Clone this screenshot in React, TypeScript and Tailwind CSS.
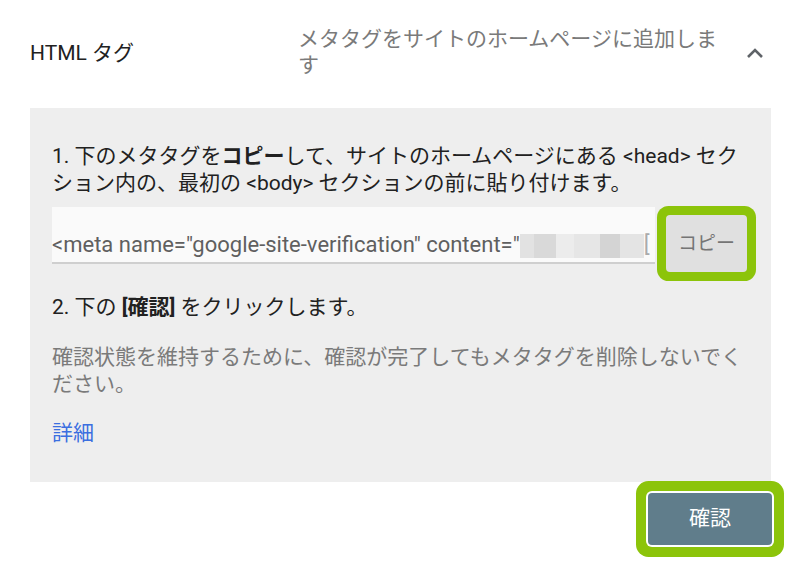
const font = "font-['Roboto','Noto_Sans_CJK_JP',sans-serif]";

function ChevronUp() {
  return (
    <svg width="18" height="12" viewBox="0 0 18 12" fill="none">
      <path d="M2 10 L9 3 L16 10" stroke="#5f6368" strokeWidth="2.6" />
    </svg>
  );
}

export default function App() {
  return (
    <div className={`${font} bg-white w-[800px] h-[564px] overflow-hidden text-[#212121]`}>
      {/* header row */}
      <div className="h-[108px] flex items-center pl-[30px]">
        <div className="w-[268px] text-[21px]">HTML タグ</div>
        <div className="w-[428px] text-[21px] leading-[26px] text-[#7a7a7a] -mt-[4px]">
          メタタグをサイトのホームページに追加します
        </div>
        <div className="ml-[20px] -mt-[2px]">
          <ChevronUp />
        </div>
      </div>

      {/* expanded body */}
      <div className="ml-[30px] w-[741px] bg-[#eeeeee] pl-[22px] pr-[24px] pt-[35px] pb-[35px] text-[21px] leading-[27px]">
        <p>
          1. 下のメタタグを<b className="font-bold">コピー</b>して、サイトのホームページにある &lt;head&gt; セクション内の、最初の &lt;body&gt; セクションの前に貼り付けます。
        </p>

        <div className="mt-[10px] flex items-start">
          <div className="w-[604px] h-[57px] bg-[#fafafa] border-b-2 border-[#cfcfcf] flex items-end pb-[3px] overflow-hidden whitespace-nowrap text-[22px] leading-[28px] text-[#5f5f5f]">
            <span>&lt;meta name="google-site-verification" content="</span>
            <span className="flex items-end h-[26px] mb-[1px]">
              <span className="w-[14px] h-[24px] bg-[#e2e2e2]" />
              <span className="w-[22px] h-[24px] bg-[#d9d9d9]" />
              <span className="w-[18px] h-[24px] bg-[#ececec]" />
              <span className="w-[26px] h-[24px] bg-[#e6e6e6]" />
              <span className="w-[20px] h-[24px] bg-[#d4d4d4]" />
              <span className="w-[24px] h-[24px] bg-[#e4e4e4]" />
            </span>
            <span className="text-[#aaaaaa]">[</span>
          </div>
          <button className="ml-[11px] mt-[8px] -mb-[8px] w-[81px] h-[57px] rounded-[4px] bg-[#e0e0e0] text-[19px] text-[#757575] shadow-[0_0_0_9px_#8cc40a]">
            コピー
          </button>
        </div>

        <p className="mt-[30px]">
          2. 下の <b className="font-bold">[確認]</b> をクリックします。
        </p>

        <p className="mt-[23px] text-[#7a7a7a]">
          確認状態を維持するために、確認が完了してもメタタグを削除しないでください。
        </p>

        <a className="block mt-[22px] text-[#3b6fe0]">詳細</a>
      </div>

      {/* footer */}
      <div className="w-[772px] flex justify-end pt-[11px]">
        <button className="w-[124px] h-[52px] rounded-[4px] bg-[#607d8b] text-white text-[21px] shadow-[0_0_0_2px_#ffffff,0_0_0_12px_#8cc40a]">
          確認
        </button>
      </div>
    </div>
  );
}
